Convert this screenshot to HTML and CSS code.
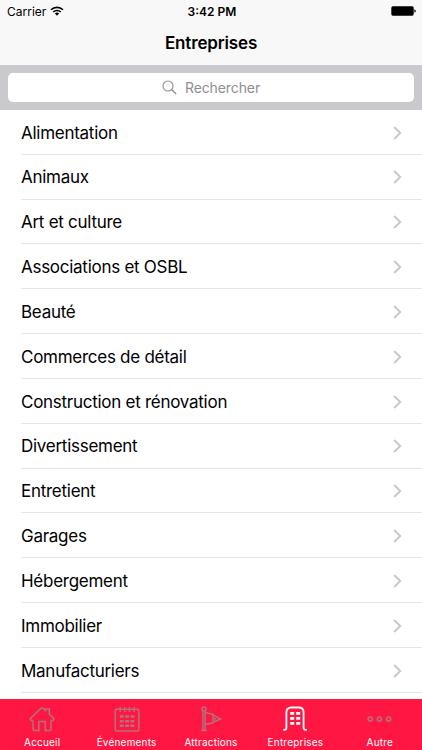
FILE: index.html
```html
<!DOCTYPE html>
<html lang="fr">
<head>
    <meta charset="utf-8">
    <title>Entreprises</title>
    <link rel="stylesheet" href="styles.css">
</head>
<body>
    <div class="status-bar">
        <div class="carrier">
            <span>Carrier</span>
            <svg width="14" height="10" viewBox="0 0 14 10">
                <path d="M1 3.8a8.6 8.6 0 0 1 12 0M3.2 6a5.4 5.4 0 0 1 7.6 0" fill="none" stroke="#000" stroke-width="1.6"/>
                <path d="M4.9 7.5a3 3 0 0 1 4.2 0L7 9.7z"/>
            </svg>
        </div>
        <div class="time">3:42 PM</div>
        <div class="battery">
            <svg width="25" height="10" viewBox="0 0 25 10">
                <rect x="0.3" y="0.3" width="22.4" height="9.4" rx="1.6"/>
                <path d="M23.4 3.3q1.4 .5 1.4 1.7t-1.4 1.7z"/>
            </svg>
        </div>
    </div>

    <h1 class="title">Entreprises</h1>

    <div class="search-bar">
        <div class="search-field">
            <svg width="15" height="15" viewBox="0 0 15 15" fill="none" stroke="#8e8e93" stroke-width="1.1">
                <circle cx="6" cy="6" r="5"/>
                <path d="M9.6 9.6l4.5 4.3" stroke-width="1.4"/>
            </svg>
            <span>Rechercher</span>
        </div>
    </div>

    <svg class="defs">
        <symbol id="chevron" viewBox="0 0 9 14">
            <path d="M1.2 1l6 6-6 6" fill="none" stroke="#c7c7cc" stroke-width="1.9"/>
        </symbol>
    </svg>

    <ul class="list">
        <li><span>Alimentation</span><svg class="chevron"><use href="#chevron"/></svg></li>
        <li><span>Animaux</span><svg class="chevron"><use href="#chevron"/></svg></li>
        <li><span>Art et culture</span><svg class="chevron"><use href="#chevron"/></svg></li>
        <li><span>Associations et OSBL</span><svg class="chevron"><use href="#chevron"/></svg></li>
        <li><span>Beauté</span><svg class="chevron"><use href="#chevron"/></svg></li>
        <li><span>Commerces de détail</span><svg class="chevron"><use href="#chevron"/></svg></li>
        <li><span>Construction et rénovation</span><svg class="chevron"><use href="#chevron"/></svg></li>
        <li><span>Divertissement</span><svg class="chevron"><use href="#chevron"/></svg></li>
        <li><span>Entretient</span><svg class="chevron"><use href="#chevron"/></svg></li>
        <li><span>Garages</span><svg class="chevron"><use href="#chevron"/></svg></li>
        <li><span>Hébergement</span><svg class="chevron"><use href="#chevron"/></svg></li>
        <li><span>Immobilier</span><svg class="chevron"><use href="#chevron"/></svg></li>
        <li><span>Manufacturiers</span><svg class="chevron"><use href="#chevron"/></svg></li>
    </ul>

    <div class="tab-bar">
        <div class="tab">
            <svg class="icon" viewBox="0 0 28 28">
                <path d="M5 15.4V24q0 1.5 1.5 1.5h4.3v-9h6.4v9h4.3q1.5 0 1.5-1.5v-8.6"/>
                <path d="M5 15.4H3.4q-2-.6-.7-2.2L12.9 3.4q1.1-.9 2.2 0l2.4 2.2V4h3.8v5.2l4.2 4q1.2 1.7-.8 2.2h-1.7"/>
            </svg>
            <span>Accueil</span>
        </div>
        <div class="tab">
            <svg class="icon" viewBox="0 0 28 28">
                <rect x="2.2" y="4.3" width="23.6" height="21.8" rx="1.5"/>
                <path d="M7.2 2v5M11.8 2v5M16.4 2v5M21 2v5"/>
                <path d="M6.8 11.5h14.6M6.8 16.2h14.6M6.8 20.8h14.6" stroke-width="2.6" stroke-dasharray="4 1.3"/>
            </svg>
            <span>Événements</span>
        </div>
        <div class="tab">
            <svg class="icon" viewBox="0 0 28 28">
                <circle cx="7" cy="4" r="2"/>
                <path d="M6 6v19M8.1 6v19M4.2 25.4h5.7M8.1 7.4l8 2v8.4l-8 1.6M16.1 10.2l7.4 3.7-7.4 3.4M16.1 13.8h3"/>
            </svg>
            <span>Attractions</span>
        </div>
        <div class="tab active">
            <svg class="icon" viewBox="0 0 28 28">
                <path d="M2.2 24.8h1.2q2 0 2-2V7.5q0-5 5-5h7.2q5 0 5 5v15.3q0 2 2 2h1.2" stroke-width="1.8"/>
                <path d="M9.2 8.4h10M9.2 13.4h10M9.2 18.4h10" stroke-width="2.6" stroke-dasharray="4 2"/>
            </svg>
            <span>Entreprises</span>
        </div>
        <div class="tab">
            <svg class="icon" viewBox="0 0 28 28">
                <circle cx="4.2" cy="14" r="2.1"/>
                <circle cx="13.4" cy="14" r="2.1"/>
                <circle cx="22.6" cy="14" r="2.1"/>
            </svg>
            <span>Autre</span>
        </div>
    </div>
</body>
</html>
```

FILE: styles.css
```css
* {
    box-sizing: border-box;
}
body {
    margin: 0;
    height: 750px;
    display: flex;
    flex-direction: column;
    overflow: hidden;
    background-color: #fff;
    color: #000;
    font-family: Inter, "Liberation Sans", sans-serif;
}
.status-bar {
    height: 22px;
    flex: none;
    display: grid;
    grid-template-columns: 1fr auto 1fr;
    align-items: center;
    padding: 0 6px 0 7px;
    background-color: #f8f8f8;
    font-size: 12px;
}
.carrier {
    display: flex;
    align-items: center;
    gap: 4px;
}
.time {
    padding-left: 1px;
    font-weight: 600;
}
.battery {
    display: flex;
    justify-content: flex-end;
}
.title {
    height: 43px;
    flex: none;
    margin: 0;
    background-color: #f8f8f8;
    font-size: 17px;
    font-weight: 600;
    line-height: 43px;
    text-align: center;
    letter-spacing: -0.15px;
}
.search-bar {
    height: 45px;
    flex: none;
    padding: 8px;
    background-color: #c9c9ce;
}
.search-field {
    height: 29px;
    display: flex;
    align-items: center;
    justify-content: center;
    gap: 8px;
    border-radius: 5px;
    background-color: #fff;
    color: #8e8e93;
    font-size: 14px;
    letter-spacing: -0.1px;
}
.defs {
    display: none;
}
.list {
    flex: 1;
    min-height: 0;
    overflow: hidden;
    margin: 0;
    padding: 0 0 0 21px;
    list-style: none;
}
.list li {
    height: 44.83px;
    display: flex;
    align-items: center;
    justify-content: space-between;
    padding: 1.4px 20.5px 0 0;
    border-bottom: 1px solid #e6e6e8;
    font-size: 17px;
    letter-spacing: -0.27px;
}
.chevron {
    width: 9px;
    height: 14px;
}
.tab-bar {
    height: 51px;
    flex: none;
    display: flex;
    background-color: #ff1744;
}
.tab {
    flex: 1;
    display: flex;
    flex-direction: column;
    align-items: center;
    padding-top: 6px;
    color: #fff;
    font-size: 10px;
    line-height: 12px;
    letter-spacing: 0.2px;
}
.icon {
    width: 28px;
    height: 28px;
    margin-bottom: 3px;
    fill: none;
    stroke: #b5707c;
    stroke-width: 1.5;
}
.active .icon {
    stroke: #fff;
}
```
